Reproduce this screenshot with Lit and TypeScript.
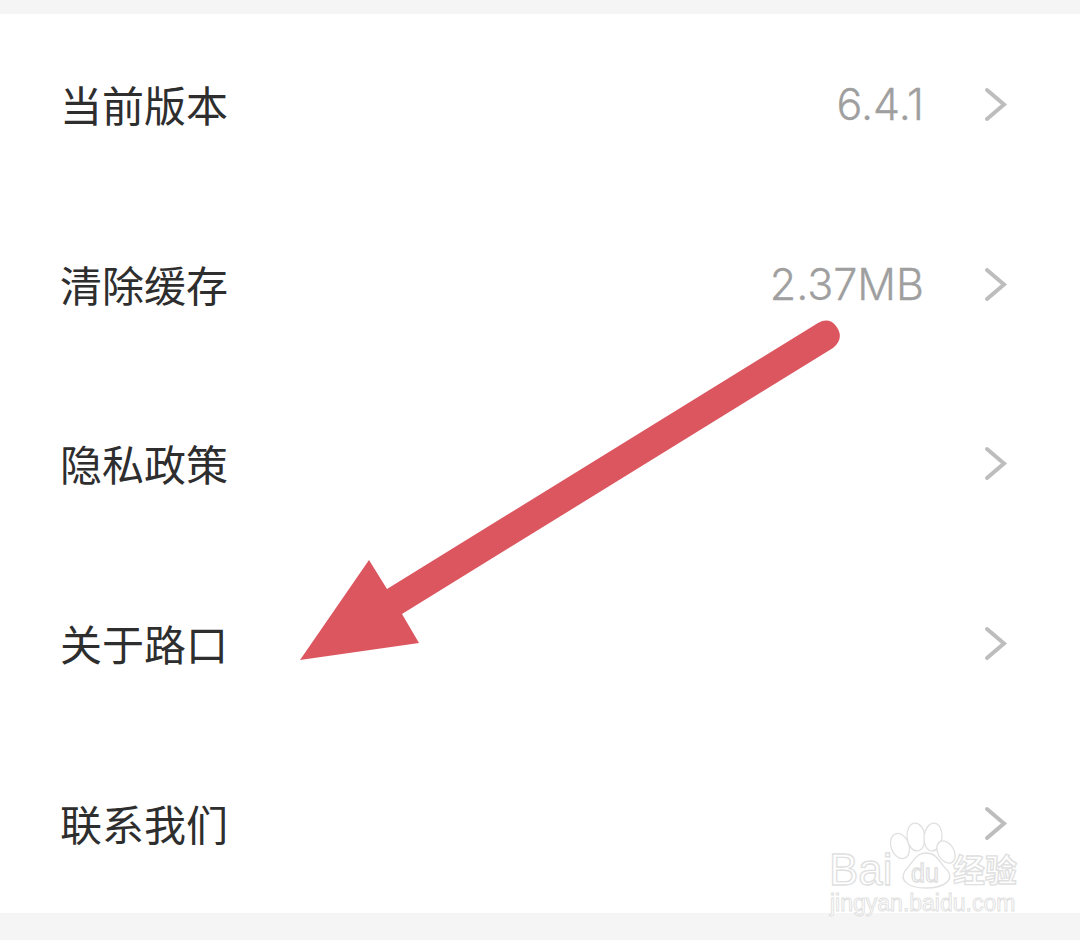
import { LitElement, html, css, svg } from "lit";
import { customElement } from "lit/decorators.js";

const rows = [
  { label: "当前版本", value: "6.4.1" },
  { label: "清除缓存", value: "2.37MB" },
  { label: "隐私政策", value: "" },
  { label: "关于路口", value: "" },
  { label: "联系我们", value: "" },
];

@customElement("app-root")
export class AppRoot extends LitElement {
  static styles = css`
    :host {
      display: block;
      position: relative;
      width: 1080px;
      height: 940px;
      overflow: hidden;
      background: #f5f5f5;
      font-family: "Noto Sans CJK SC", "Noto Sans", sans-serif;
    }
    .list {
      display: flex;
      flex-direction: column;
      margin-top: 14px;
      background: #fff;
      height: 899px;
    }
    .row {
      flex: 1;
      display: flex;
      align-items: center;
      padding: 0 72px 0 60px;
    }
    .label {
      flex: 1;
      font-size: 42px;
      line-height: 50px;
      color: #2e2e2e;
    }
    .value {
      font-family: Inter, sans-serif;
      font-weight: 300;
      font-size: 43px;
      line-height: 50px;
      color: #9f9f9f;
      margin-right: 60px;
      -webkit-text-stroke: 0.3px #9f9f9f;
    }
    .chev {
      width: 24px;
      height: 36px;
      display: block;
      position: relative;
      top: 1px;
    }
    .arrow {
      position: absolute;
      left: 0;
      top: 0;
      pointer-events: none;
    }
    .wm {
      position: absolute;
      left: 0;
      top: 0;
      width: 1080px;
      height: 940px;
      pointer-events: none;
    }
    .wm text {
      fill: #fff;
      stroke: #e0e0e0;
      stroke-width: 1.3;
    }
    .wm .big { font-family: "Liberation Sans", sans-serif; font-size: 44px; }
    .wm .cn { font-family: "Noto Sans CJK SC", sans-serif; font-size: 32px; font-weight: 700; }
    .wm .du { font-family: "Liberation Sans", sans-serif; font-size: 25px; }
    .wm .url { font-family: "Liberation Sans", sans-serif; font-size: 23px; stroke-width: 0.9; }
    .wm .paw { fill: #fff; stroke: #e0e0e0; stroke-width: 1.3; }
  `;

  private chevron() {
    return html`<svg class="chev" viewBox="0 0 24 36">
      <path d="M3 3 L20 17.5 L3 32" fill="none" stroke="#bdbdbd" stroke-width="4" stroke-linecap="round" stroke-linejoin="miter"/>
    </svg>`;
  }

  render() {
    return html`
      <div class="list">
        ${rows.map(
          (r) => html`<div class="row">
            <span class="label">${r.label}</span>
            ${r.value ? html`<span class="value">${r.value}</span>` : ""}
            ${this.chevron()}
          </div>`
        )}
      </div>
      <svg class="wm" viewBox="0 0 1080 940">
        ${svg`
          <ellipse class="paw" cx="900" cy="846" rx="9" ry="13" transform="rotate(-20 900 846)"/>
          <ellipse class="paw" cx="916" cy="837" rx="9" ry="14" transform="rotate(-6 916 837)"/>
          <ellipse class="paw" cx="933" cy="837" rx="9" ry="14" transform="rotate(6 933 837)"/>
          <ellipse class="paw" cx="946" cy="852" rx="8" ry="12" transform="rotate(-30 946 852)"/>
          <path class="paw" d="M926 853 C915 853 912 864 905 871 C899 880 908 888 926 888 C944 888 954 880 948 871 C940 864 938 853 926 853 Z"/>
          <text class="big" x="829" y="885">Bai</text>
          <text class="du" x="911" y="882">du</text>
          <text class="cn" x="953" y="882">经验</text>
          <text class="url" x="830" y="911">jingyan.baidu.com</text>
        `}
      </svg>
      <svg class="arrow" width="1080" height="940" viewBox="0 0 1080 940">
        <path d="M818 323 Q829 317 836 326 Q845 338 833 348 L402 614 L419 643 L300 660 L369 560 L387 589 Z" fill="#dc5660"/>
      </svg>
    `;
  }
}
